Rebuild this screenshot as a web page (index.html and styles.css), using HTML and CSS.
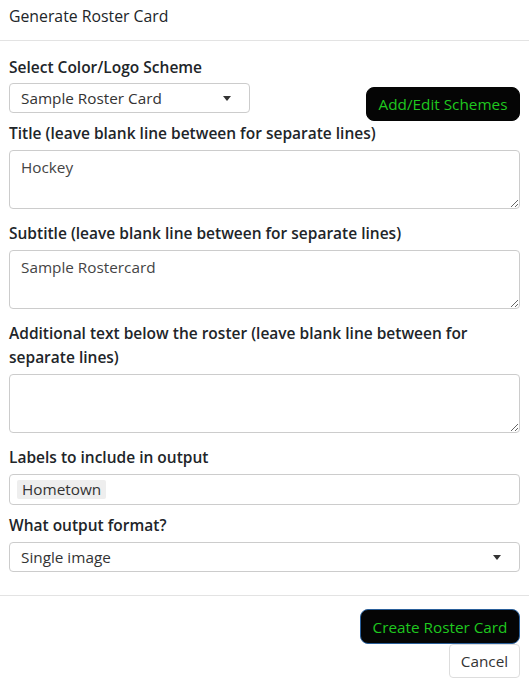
FILE: index.html
```html
<!DOCTYPE html>
<html>
<head>
<meta charset="utf-8">
<link rel="stylesheet" href="styles.css">
</head>
<body>
<div class="modal">
  <div class="modal-header">Generate Roster Card</div>
  <div class="modal-body">
    <div class="group first">
      <div class="label">Select Color/Logo Scheme</div>
      <div class="scheme-row">
        <div class="select select-small"><span>Sample Roster Card</span><i class="caret"></i></div>
        <button class="btn btn-dark btn-add">Add/Edit Schemes</button>
      </div>
    </div>
    <div class="group">
      <div class="label">Title (leave blank line between for separate lines)</div>
      <textarea class="area" readonly>Hockey</textarea>
    </div>
    <div class="group">
      <div class="label">Subtitle (leave blank line between for separate lines)</div>
      <textarea class="area" readonly>Sample Rostercard</textarea>
    </div>
    <div class="group">
      <div class="label">Additional text below the roster (leave blank line between for separate lines)</div>
      <textarea class="area" readonly></textarea>
    </div>
    <div class="group short">
      <div class="label">Labels to include in output</div>
      <div class="multi"><span class="chip">Hometown</span></div>
    </div>
    <div class="group last">
      <div class="label">What output format?</div>
      <div class="select"><span>Single image</span><i class="caret"></i></div>
    </div>
  </div>
  <div class="modal-footer">
    <button class="btn btn-dark btn-create">Create Roster Card</button>
    <button class="btn btn-light">Cancel</button>
  </div>
</div>
</body>
</html>
```

FILE: styles.css
```css
* { box-sizing: border-box; }
body {
  margin: 0;
  background: #fff;
  font-family: "Open Sans", "Noto Sans", sans-serif;
  font-size: 15.3px;
  color: #212529;
}
.modal { width: 529px; }
.modal-header {
  padding: 4px 9px 12px;
  font-size: 15.8px;
  line-height: 24px;
  border-bottom: 1px solid #e3e3e3;
}
.modal-body {
  padding: 14px 9px 23px;
}
.group { margin-bottom: 12px; }
.group.first { margin-bottom: 0; }
.group.short { margin-bottom: 8px; }
.group.last { margin-bottom: 0; }
.label {
  font-weight: 600;
  font-size: 15.5px;
  line-height: 24px;
  margin-bottom: 5px;
}
.scheme-row {
  display: flex;
  justify-content: space-between;
  align-items: flex-start;
  margin-top: -1px;
}
.select {
  height: 30px;
  border: 1px solid #ccc;
  border-radius: 4px;
  display: flex;
  align-items: center;
  justify-content: space-between;
  padding: 0 18px 0 11px;
  color: #333;
}
.select-small { width: 241px; }
.caret {
  width: 0; height: 0;
  border-left: 4px solid transparent;
  border-right: 4px solid transparent;
  border-top: 5px solid #333;
}
.btn {
  font-family: inherit;
  font-size: 15.3px;
  border-radius: 8px;
  cursor: pointer;
}
.btn-dark {
  background: #050505;
  color: #1fc81f;
  border: 1px solid #050505;
}
.btn-add {
  margin-top: 4px;
  height: 34px;
  width: 154px;
  padding: 0;
}
.area {
  display: block;
  width: 100%;
  height: 59px;
  border: 1px solid #ccc;
  border-radius: 4px;
  padding: 5px 11px;
  font-family: inherit;
  font-size: 15.3px;
  line-height: 22px;
  color: #444;
  resize: vertical;
  outline: none;
}
.multi {
  height: 31px;
  border: 1px solid #ccc;
  border-radius: 4px;
  padding: 5px 7px;
  display: flex;
  align-items: center;
}
.chip {
  background: #eee;
  border-radius: 2px;
  padding: 0 5px;
  line-height: 19px;
  color: #333;
}
.modal-footer {
  border-top: 1px solid #e3e3e3;
  padding: 14px 9px 0;
  display: flex;
  flex-direction: column;
  align-items: flex-end;
}
.btn-create {
  height: 35px;
  width: 160px;
  border-color: #2a5f9a;
  padding: 0;
  margin-top: -1px;
}
.btn-light {
  background: #fff;
  color: #333;
  border: 1px solid #ddd;
  height: 34px;
  width: 71px;
  padding: 0;
  border-radius: 4px;
}
```
